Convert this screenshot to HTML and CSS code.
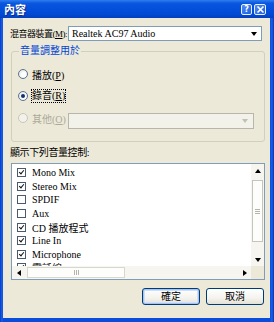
FILE: index.html
```html
<!DOCTYPE html>
<html>
<head>
<meta charset="utf-8">
<link rel="stylesheet" href="styles.css">
</head>
<body>
<div class="window">
  <div class="titlebar">
    <span class="title">內容</span>
    <div class="tbtns">
      <span class="tbtn help">?</span>
      <span class="tbtn close"><svg width="9" height="9" viewBox="0 0 9 9"><path d="M1.5 1.5 L7.5 7.5 M7.5 1.5 L1.5 7.5" stroke="#fff" stroke-width="1.6" fill="none"/></svg></span>
    </div>
  </div>
  <div class="client">
    <div class="row-device">
      <span class="lbl">混音器裝置(<u>M</u>):</span>
      <div class="select"><span class="val">Realtek AC97 Audio</span><span class="arrow"></span></div>
    </div>
    <div class="group">
      <span class="legend">音量調整用於</span>
      <div class="radio-row"><span class="radio"></span><span>播放(<u>P</u>)</span></div>
      <div class="radio-row"><span class="radio on"></span><span class="focus">錄音(<u>R</u>)</span></div>
      <div class="radio-row disabled"><span class="radio"></span><span>其他(<u>O</u>)</span><div class="select dis"><span class="arrow"></span></div></div>
    </div>
    <div class="caption">顯示下列音量控制:</div>
    <div class="listbox">
      <div class="items">
        <div class="item"><span class="cb on"></span>Mono Mix</div>
        <div class="item"><span class="cb on"></span>Stereo Mix</div>
        <div class="item"><span class="cb"></span>SPDIF</div>
        <div class="item"><span class="cb"></span>Aux</div>
        <div class="item"><span class="cb on"></span>CD 播放程式</div>
        <div class="item"><span class="cb on"></span>Line In</div>
        <div class="item"><span class="cb on"></span>Microphone</div>
        <div class="item"><span class="cb on"></span>電話線</div>
      </div>
      <div class="vscroll">
        <span class="sbtn"><span class="tri up"></span></span>
        <span class="vthumb"><span class="hgrip"></span></span>
        <span class="sbtn last"><span class="tri down"></span></span>
      </div>
      <div class="hscroll">
        <span class="sbtn"><span class="tri left"></span></span>
        <span class="hthumb"><span class="vgrip"></span></span>
        <span class="sbtn last"><span class="tri right"></span></span>
      </div>
      <div class="corner"></div>
    </div>
    <div class="buttons">
      <button class="btn default">確定</button>
      <button class="btn">取消</button>
    </div>
  </div>
</div>
</body>
</html>
```
FILE: styles.css
```css
body {
  margin: 0;
  width: 274px;
  height: 322px;
  overflow: hidden;
  font-family: "Liberation Serif", "Noto Sans CJK TC", serif;
  font-size: 10px;
  color: #000;
}
u { text-decoration: underline; }

.window {
  height: 322px;
  display: flex;
  flex-direction: column;
  background: linear-gradient(to right, #0839c8 0, #1a62e8 2px, #0a4ddb 3px, #0a4ddb 270px, #1b5ee6 272px, #0733b8 274px);
}

.titlebar {
  height: 18px;
  flex: none;
  display: flex;
  align-items: center;
  padding: 0 8px 0 4px;
  background: linear-gradient(to bottom, #2f7ef0 0%, #0a56de 18%, #044fdc 50%, #0349d2 80%, #0340c0 100%);
}
.title {
  color: #fff;
  font-family: "Noto Sans CJK TC", sans-serif;
  font-weight: bold;
  font-size: 11px;
  line-height: 12px;
  text-shadow: 1px 1px #0b2a8a;
}
.tbtns { margin-left: auto; display: flex; gap: 2px; }
.tbtn {
  width: 11px;
  height: 11px;
  box-sizing: border-box;
  border: 1px solid #e8eefc;
  border-radius: 2px;
  background: linear-gradient(135deg, #4d8cf4, #1d5ee0);
  display: flex;
  align-items: center;
  justify-content: center;
  color: #fff;
  font-family: "DejaVu Sans", sans-serif;
  font-weight: bold;
  font-size: 8px;
  line-height: 9px;
}
.close { width: 12px; }

.client {
  flex: 1;
  margin: 0 4px 4px 3px;
  background: #ece9d8;
  display: flex;
  flex-direction: column;
}

.row-device {
  margin-top: 8px;
  display: grid;
  grid-template-columns: 58px 1fr;
  align-items: center;
  padding: 0 8px 0 7px;
  height: 15px;
}
.lbl {
  white-space: nowrap;
  font-size: 9px;
  letter-spacing: -0.5px;
  line-height: 12px;
  overflow: hidden;
}
.select {
  height: 15px;
  box-sizing: border-box;
  border: 1px solid #7f9db9;
  background: #fff;
  display: flex;
  align-items: center;
  padding-left: 3px;
}
.select .val { line-height: 12px; white-space: nowrap; }
.arrow {
  margin-left: auto;
  margin-right: 4px;
  width: 0;
  height: 0;
  border-left: 3.5px solid transparent;
  border-right: 3.5px solid transparent;
  border-top: 4px solid #000;
}

.group {
  margin: 10px 5px 0 8px;
  height: 91px;
  box-sizing: border-box;
  border: 1px solid #d0d0bf;
  border-radius: 3px;
  display: flex;
  flex-direction: column;
  padding-left: 6px;
}
.legend {
  align-self: flex-start;
  margin: -7px 0 0 1px;
  padding: 0 1px;
  height: 12px;
  line-height: 12px;
  background: #ece9d8;
  color: #0046d5;
  white-space: nowrap;
}
.radio-row {
  height: 22px;
  display: flex;
  align-items: center;
  white-space: nowrap;
}
.legend + .radio-row { margin-top: 6px; }
.radio {
  width: 10px;
  height: 10px;
  box-sizing: border-box;
  border-radius: 50%;
  border: 1px solid #5a7394;
  background: radial-gradient(circle at 60% 60%, #ffffff 30%, #dcdad0 100%);
  margin-right: 4px;
  display: flex;
  align-items: center;
  justify-content: center;
  flex: none;
}
.radio.on::after {
  content: "";
  width: 4px;
  height: 4px;
  border-radius: 50%;
  background: #10307a;
}
.focus {
  outline: 1px dotted #000;
  outline-offset: 0;
  line-height: 12px;
}
.disabled { color: #aca899; }
.disabled .radio { border-color: #c9c7ba; background: #f3f2ea; }
.select.dis {
  margin-left: auto;
  margin-right: 10px;
  width: 186px;
  height: 16px;
  align-self: flex-end;
  border-color: #b8b6aa;
  background: #f2f1ea;
}
.select.dis .arrow { border-top-color: #c1c0b8; margin-right: 5px; }

.caption {
  margin-top: 5px;
  padding-left: 7px;
  line-height: 12px;
  letter-spacing: -0.4px;
}

.listbox {
  margin: 4px 5px 0 8px;
  height: 117px;
  box-sizing: border-box;
  border: 1px solid #7f9db9;
  background: #fff;
  display: grid;
  grid-template-columns: 1fr 13px;
  grid-template-rows: 1fr 13px;
  overflow: hidden;
}
.items {
  padding-top: 2px;
  overflow: hidden;
  min-height: 0;
}
.item {
  height: 13.6px;
  display: flex;
  align-items: center;
  padding-left: 5px;
  white-space: nowrap;
}
.cb {
  width: 9px;
  height: 9px;
  box-sizing: border-box;
  border: 1px solid #4a5a6e;
  background: #fff;
  margin-right: 6px;
  flex: none;
  position: relative;
}
.cb.on::after {
  content: "";
  position: absolute;
  left: 1.5px;
  top: 0px;
  width: 2px;
  height: 4px;
  border-right: 1.5px solid #111;
  border-bottom: 1.5px solid #111;
  transform: rotate(40deg);
}

.vscroll {
  grid-column: 2;
  grid-row: 1;
  background: #f6f5f0;
  display: flex;
  flex-direction: column;
  min-height: 0;
}
.hscroll {
  grid-column: 1;
  grid-row: 2;
  background: #f6f5f0;
  display: flex;
}
.corner { grid-column: 2; grid-row: 2; background: #ece9d8; }
.sbtn {
  width: 13px;
  height: 13px;
  flex: none;
  display: flex;
  align-items: center;
  justify-content: center;
}
.vscroll .last { margin-top: auto; }
.hscroll .last { margin-left: auto; }
.tri { width: 0; height: 0; }
.tri.up { border-left: 3.5px solid transparent; border-right: 3.5px solid transparent; border-bottom: 4px solid #000; }
.tri.down { border-left: 3.5px solid transparent; border-right: 3.5px solid transparent; border-top: 4px solid #000; }
.tri.left { border-top: 3.5px solid transparent; border-bottom: 3.5px solid transparent; border-right: 4px solid #000; }
.tri.right { border-top: 3.5px solid transparent; border-bottom: 3.5px solid transparent; border-left: 4px solid #000; }
.vthumb {
  margin: 3px 1px 0 1px;
  height: 62px;
  box-sizing: border-box;
  border: 1px solid #c6c5bd;
  background: #fdfdfb;
  display: flex;
  align-items: center;
  justify-content: center;
}
.hthumb {
  margin: 1px 0 1px 2px;
  width: 98px;
  box-sizing: border-box;
  border: 1px solid #d8d7cf;
  background: #fdfdfb;
  display: flex;
  align-items: center;
  justify-content: center;
}
.hgrip {
  width: 5px;
  height: 5px;
  background: repeating-linear-gradient(to bottom, #b5b4ac 0, #b5b4ac 1px, transparent 1px, transparent 2px);
}
.vgrip {
  width: 5px;
  height: 5px;
  background: repeating-linear-gradient(to right, #b5b4ac 0, #b5b4ac 1px, transparent 1px, transparent 2px);
}

.buttons {
  margin-top: 8px;
  display: flex;
  justify-content: flex-end;
  gap: 6px;
  padding-right: 6px;
}
.btn {
  width: 58px;
  height: 17px;
  box-sizing: border-box;
  border: 1px solid #003c74;
  border-radius: 3px;
  background: linear-gradient(to bottom, #ffffff 0%, #f4f3ee 60%, #e3e1d6 100%);
  font-family: "Liberation Serif", "Noto Sans CJK TC", serif;
  font-size: 10px;
  line-height: 12px;
  padding: 0;
  color: #000;
}
.btn.default {
  box-shadow: inset 0 0 0 1px #a6c3f2, inset 0 0 0 2px #d0def8;
}
```
